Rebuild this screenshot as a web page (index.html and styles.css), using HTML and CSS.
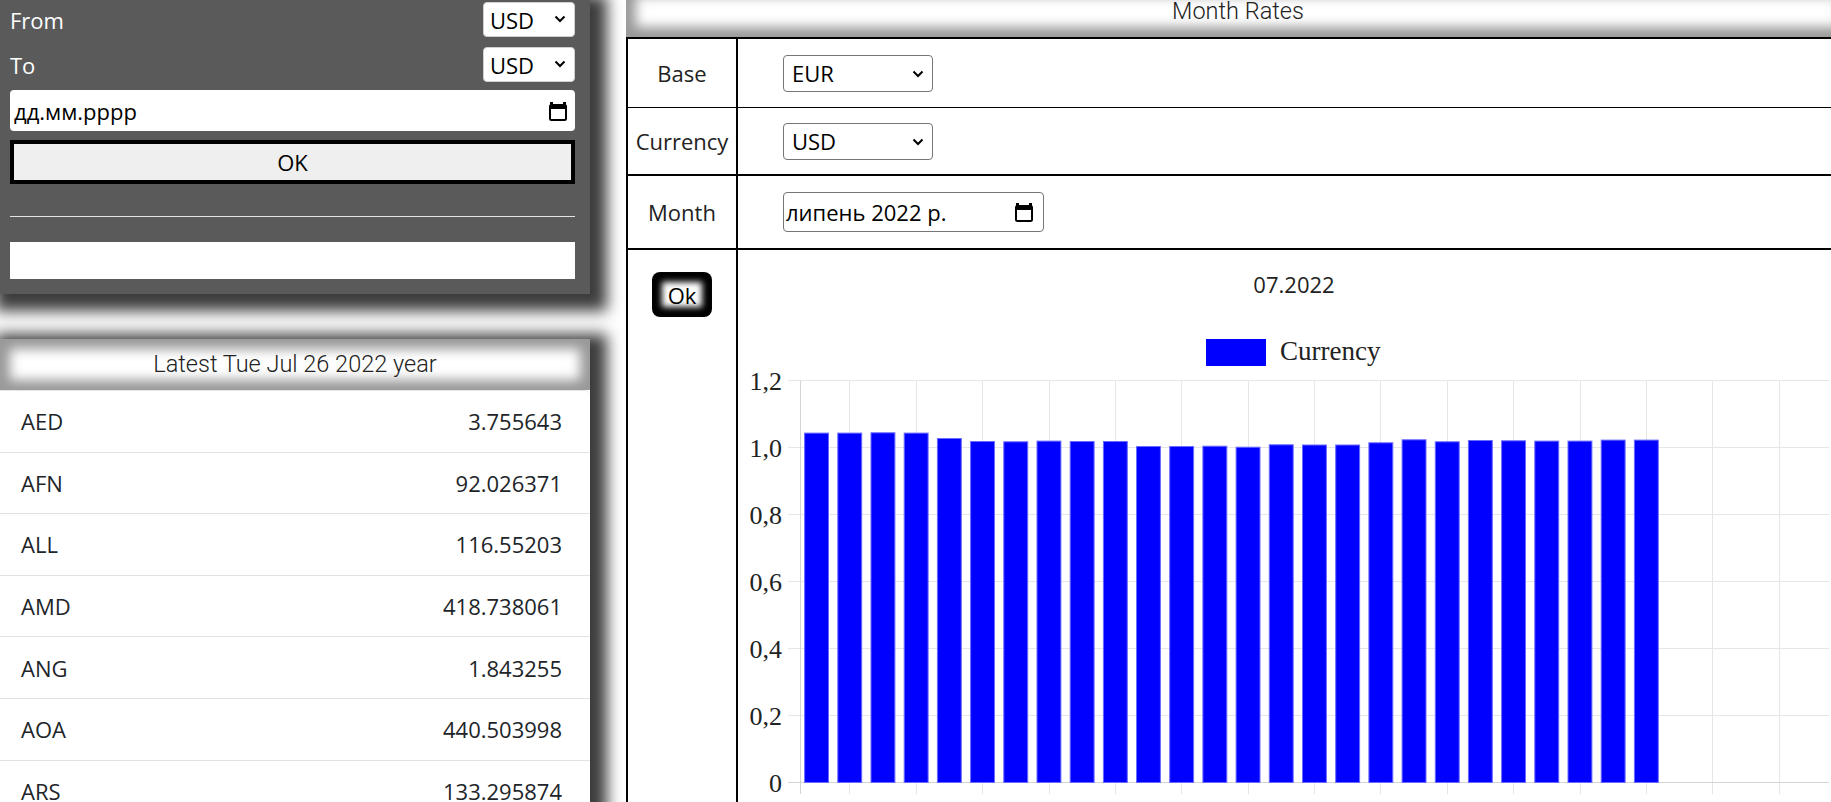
FILE: index.html
```html
<!DOCTYPE html>
<html lang="en">
<head>
<meta charset="utf-8">
<title>Currency Rates</title>
<link rel="stylesheet" href="styles.css">
</head>
<body>
<div class="page">
  <aside class="side">
    <section class="panel converter">
      <div class="field-row">
        <label class="field-label">From</label>
        <div class="select-wrap">
          <select class="select select-sm"><option>USD</option></select>
          <svg class="chev" width="12" height="8" viewBox="0 0 12 8"><path d="M1.5 1.5 L6 6 L10.5 1.5" fill="none" stroke="#000" stroke-width="2"/></svg>
        </div>
      </div>
      <div class="field-row">
        <label class="field-label">To</label>
        <div class="select-wrap">
          <select class="select select-sm"><option>USD</option></select>
          <svg class="chev" width="12" height="8" viewBox="0 0 12 8"><path d="M1.5 1.5 L6 6 L10.5 1.5" fill="none" stroke="#000" stroke-width="2"/></svg>
        </div>
      </div>
      <div class="date-input">
        <span>дд.мм.рррр</span>
        <svg class="cal" width="18" height="20" viewBox="0 0 18 20"><rect x="1" y="4" width="16" height="15" rx="1.5" fill="none" stroke="#000" stroke-width="2"/><rect x="1" y="4" width="16" height="4" fill="#000"/><rect x="1" y="1" width="3" height="4" fill="#000"/><rect x="14" y="1" width="3" height="4" fill="#000"/></svg>
      </div>
      <button class="ok-btn">OK</button>
      <hr class="divider">
      <div class="result"></div>
    </section>

    <section class="panel latest">
      <div class="glow-head">Latest Tue Jul 26 2022 year</div>
      <ul class="rate-list">
        <li class="rate-row"><span>AED</span><span>3.755643</span></li>
        <li class="rate-row"><span>AFN</span><span>92.026371</span></li>
        <li class="rate-row"><span>ALL</span><span>116.55203</span></li>
        <li class="rate-row"><span>AMD</span><span>418.738061</span></li>
        <li class="rate-row"><span>ANG</span><span>1.843255</span></li>
        <li class="rate-row"><span>AOA</span><span>440.503998</span></li>
        <li class="rate-row"><span>ARS</span><span>133.295874</span></li>
      </ul>
    </section>
  </aside>

  <main class="rates">
    <div class="glow-head">Month Rates</div>
    <div class="form">
      <div class="cell label-cell row1">Base</div>
      <div class="cell value-cell row1">
        <div class="select-wrap">
          <select class="select select-lg"><option>EUR</option></select>
          <svg class="chev chev-lg" width="12" height="8" viewBox="0 0 12 8"><path d="M1.5 1.5 L6 6 L10.5 1.5" fill="none" stroke="#000" stroke-width="2"/></svg>
        </div>
      </div>

      <div class="cell label-cell row2">Currency</div>
      <div class="cell value-cell row2">
        <div class="select-wrap">
          <select class="select select-lg"><option>USD</option></select>
          <svg class="chev chev-lg" width="12" height="8" viewBox="0 0 12 8"><path d="M1.5 1.5 L6 6 L10.5 1.5" fill="none" stroke="#000" stroke-width="2"/></svg>
        </div>
      </div>

      <div class="cell label-cell row3">Month</div>
      <div class="cell value-cell row3">
        <div class="month-input">
          <span>липень 2022 р.</span>
          <svg class="cal" width="18" height="20" viewBox="0 0 18 20"><rect x="1" y="4" width="16" height="15" rx="1.5" fill="none" stroke="#000" stroke-width="2"/><rect x="1" y="4" width="16" height="4" fill="#000"/><rect x="1" y="1" width="3" height="4" fill="#000"/><rect x="14" y="1" width="3" height="4" fill="#000"/></svg>
        </div>
      </div>

      <div class="cell label-cell row4"><button class="ok-small">Ok</button></div>
      <div class="cell chart-cell row4">
        <div class="chart-title">07.2022</div>
        <svg class="chart" width="1112" height="500" viewBox="0 0 1112 500">
          <g transform="translate(1,0)">
            <g class="grid" stroke="#e6e6e6" stroke-width="1">
              <line x1="49" y1="397.5" x2="1090" y2="397.5"/>
              <line x1="49" y1="330.5" x2="1090" y2="330.5"/>
              <line x1="49" y1="263.5" x2="1090" y2="263.5"/>
              <line x1="49" y1="196.5" x2="1090" y2="196.5"/>
              <line x1="49" y1="129.5" x2="1090" y2="129.5"/>
              <line x1="49" y1="62.5" x2="1090" y2="62.5"/>
              <line x1="110.5" y1="62.5" x2="110.5" y2="476"/>
              <line x1="177.5" y1="62.5" x2="177.5" y2="476"/>
              <line x1="243.5" y1="62.5" x2="243.5" y2="476"/>
              <line x1="310.5" y1="62.5" x2="310.5" y2="476"/>
              <line x1="376.5" y1="62.5" x2="376.5" y2="476"/>
              <line x1="442.5" y1="62.5" x2="442.5" y2="476"/>
              <line x1="509.5" y1="62.5" x2="509.5" y2="476"/>
              <line x1="575.5" y1="62.5" x2="575.5" y2="476"/>
              <line x1="641.5" y1="62.5" x2="641.5" y2="476"/>
              <line x1="708.5" y1="62.5" x2="708.5" y2="476"/>
              <line x1="774.5" y1="62.5" x2="774.5" y2="476"/>
              <line x1="841.5" y1="62.5" x2="841.5" y2="476"/>
              <line x1="907.5" y1="62.5" x2="907.5" y2="476"/>
              <line x1="973.5" y1="62.5" x2="973.5" y2="476"/>
              <line x1="1040.5" y1="62.5" x2="1040.5" y2="476"/>
            </g>
            <g stroke="#d4d4d4" stroke-width="1">
              <line x1="61.5" y1="62.5" x2="61.5" y2="476"/>
              <line x1="49" y1="464.5" x2="1090" y2="464.5"/>
            </g>
            <g class="bars" fill="#0000ff" stroke="#6a6aff" stroke-width="1">
              <rect x="65.6" y="115.1" width="23.9" height="349.4"/>
              <rect x="98.8" y="115.1" width="23.9" height="349.4"/>
              <rect x="132.0" y="114.8" width="23.9" height="349.7"/>
              <rect x="165.2" y="115.1" width="23.9" height="349.4"/>
              <rect x="198.4" y="120.5" width="23.9" height="344.0"/>
              <rect x="231.6" y="123.5" width="23.9" height="341.0"/>
              <rect x="264.8" y="123.8" width="23.9" height="340.7"/>
              <rect x="298.0" y="123.1" width="23.9" height="341.4"/>
              <rect x="331.2" y="123.5" width="23.9" height="341.0"/>
              <rect x="364.4" y="123.5" width="23.9" height="341.0"/>
              <rect x="397.5" y="128.5" width="23.9" height="336.0"/>
              <rect x="430.7" y="128.5" width="23.9" height="336.0"/>
              <rect x="463.9" y="128.2" width="23.9" height="336.3"/>
              <rect x="497.1" y="129.2" width="23.9" height="335.3"/>
              <rect x="530.3" y="126.8" width="23.9" height="337.7"/>
              <rect x="563.5" y="127.0" width="23.9" height="337.5"/>
              <rect x="596.7" y="127.0" width="23.9" height="337.5"/>
              <rect x="629.9" y="124.8" width="23.9" height="339.7"/>
              <rect x="663.1" y="121.8" width="23.9" height="342.7"/>
              <rect x="696.3" y="123.8" width="23.9" height="340.7"/>
              <rect x="729.4" y="122.5" width="23.9" height="342.0"/>
              <rect x="762.6" y="122.8" width="23.9" height="341.7"/>
              <rect x="795.8" y="123.1" width="23.9" height="341.4"/>
              <rect x="829.0" y="123.1" width="23.9" height="341.4"/>
              <rect x="862.2" y="122.1" width="23.9" height="342.4"/>
              <rect x="895.4" y="122.1" width="23.9" height="342.4"/>
            </g>
            <g class="ticks" fill="#222" font-family="'Liberation Serif', 'Times New Roman', serif" font-size="26" text-anchor="end">
              <text x="43" y="71.5">1,2</text>
              <text x="43" y="138.5">1,0</text>
              <text x="43" y="205.5">0,8</text>
              <text x="43" y="272.5">0,6</text>
              <text x="43" y="339.5">0,4</text>
              <text x="43" y="406.5">0,2</text>
              <text x="43" y="473.5">0</text>
            </g>
            <rect x="467" y="21" width="60" height="27" fill="#0000ff"/>
            <text x="541" y="42" fill="#222" font-family="'Liberation Serif', 'Times New Roman', serif" font-size="27">Currency</text>
          </g>
        </svg>
      </div>
    </div>
  </main>
</div>
</body>
</html>
```

FILE: styles.css
```css
* {
  box-sizing: border-box;
}

html,
body {
  margin: 0;
  height: 100%;
  overflow: hidden;
  background: #fff;
  font-family: "Open Sans", "Noto Sans", sans-serif;
  font-size: 22px;
  color: #222;
}

.page {
  display: flex;
  align-items: flex-start;
  gap: 36px;
  width: 1850px;
}

.side {
  flex: 0 0 590px;
  width: 590px;
  display: flex;
  flex-direction: column;
  gap: 45px;
}

.panel {
  box-shadow: 6px 6px 14px 11px #3d3d3d;
}

/* converter */
.converter {
  background: #5a5a5a;
  padding: 2px 15px 15px 10px;
  color: #fff;
}

.field-row {
  display: flex;
  justify-content: space-between;
  align-items: center;
  height: 35px;
}

.field-row + .field-row {
  margin-top: 10px;
}

.field-label {
  font-size: 22px;
  color: #fff;
}

.select-wrap {
  position: relative;
}

.select {
  appearance: none;
  -webkit-appearance: none;
  display: block;
  background: #fff;
  color: #000;
  font-family: "Open Sans", "Noto Sans", sans-serif;
  font-size: 22px;
  margin: 0;
}

.select-sm {
  width: 92px;
  height: 35px;
  border: 1px solid #d0d0d0;
  border-radius: 4px;
  padding: 0 0 0 6px;
}

.select-lg {
  width: 150px;
  height: 37px;
  border: 1px solid #767676;
  border-radius: 4px;
  padding: 0 0 0 8px;
}

.chev {
  position: absolute;
  right: 9px;
  top: 13px;
  pointer-events: none;
}

.chev-lg {
  right: 9px;
  top: 15px;
}

.date-input {
  margin-top: 8px;
  height: 41px;
  background: #fff;
  border-radius: 4px;
  display: flex;
  align-items: center;
  justify-content: space-between;
  padding: 0 8px 0 4px;
  color: #000;
  font-size: 22px;
}

.ok-btn {
  display: block;
  width: 100%;
  margin-top: 9px;
  height: 44px;
  border: 4px solid #000;
  background: #efefef;
  color: #000;
  font-family: "Open Sans", "Noto Sans", sans-serif;
  font-size: 22px;
  padding: 0;
}

.divider {
  margin: 32px 0 25px;
  border: 0;
  border-top: 1px solid #e4e4e4;
  height: 0;
}

.result {
  height: 37px;
  background: #fff;
}

/* latest list */
.latest {
  background: #fff;
}

.glow-head {
  height: 51px;
  line-height: 51px;
  text-align: center;
  font-family: Roboto, "Liberation Sans", sans-serif;
  font-weight: 300;
  font-size: 23.5px;
  color: #222;
  background: #fff;
  box-shadow: inset 0 0 12px 10px #999;
}

.rate-list {
  list-style: none;
  margin: 0;
  padding: 0;
  border-top: 1px solid #e4e4e4;
  border-top-right-radius: 6px;
}

.rate-row {
  display: flex;
  justify-content: space-between;
  align-items: center;
  height: 61.6px;
  border-bottom: 1px solid #e2e2e2;
  padding: 0 28px 0 21px;
  font-size: 22px;
  color: #212529;
}

/* month rates */
.rates {
  flex: 0 0 1224px;
  width: 1224px;
  margin-top: -14px;
}

.form {
  display: grid;
  grid-template-columns: 110px 1fr;
  border-top: 2px solid #000;
  border-left: 2px solid #000;
}

.cell {
  display: flex;
  align-items: center;
}

.label-cell {
  justify-content: center;
  border-right: 2px solid #000;
  color: #222;
}

.value-cell {
  padding-left: 45px;
}

.row1 {
  height: 69px;
  border-bottom: 1px solid #000;
}

.row2 {
  height: 68px;
  border-bottom: 2px solid #000;
}

.row3 {
  height: 74px;
  border-bottom: 2px solid #000;
}

.row4 {
  height: 560px;
  align-items: flex-start;
}

.label-cell.row4 {
  padding-top: 22px;
}

.month-input {
  width: 261px;
  height: 40px;
  border: 1px solid #767676;
  border-radius: 4px;
  display: flex;
  align-items: center;
  justify-content: space-between;
  padding: 0 10px 0 2px;
  color: #000;
}

.ok-small {
  width: 60px;
  height: 45px;
  border: 0;
  border-radius: 8px;
  background: #fff;
  box-shadow: inset 0 0 6px 10px #000;
  color: #000;
  font-family: "Open Sans", "Noto Sans", sans-serif;
  font-size: 22px;
  padding: 0;
}

.chart-cell {
  display: block;
}

.chart-title {
  height: 68px;
  line-height: 68px;
  text-align: center;
  font-size: 22px;
  color: #222;
}

.chart {
  display: block;
}
```
